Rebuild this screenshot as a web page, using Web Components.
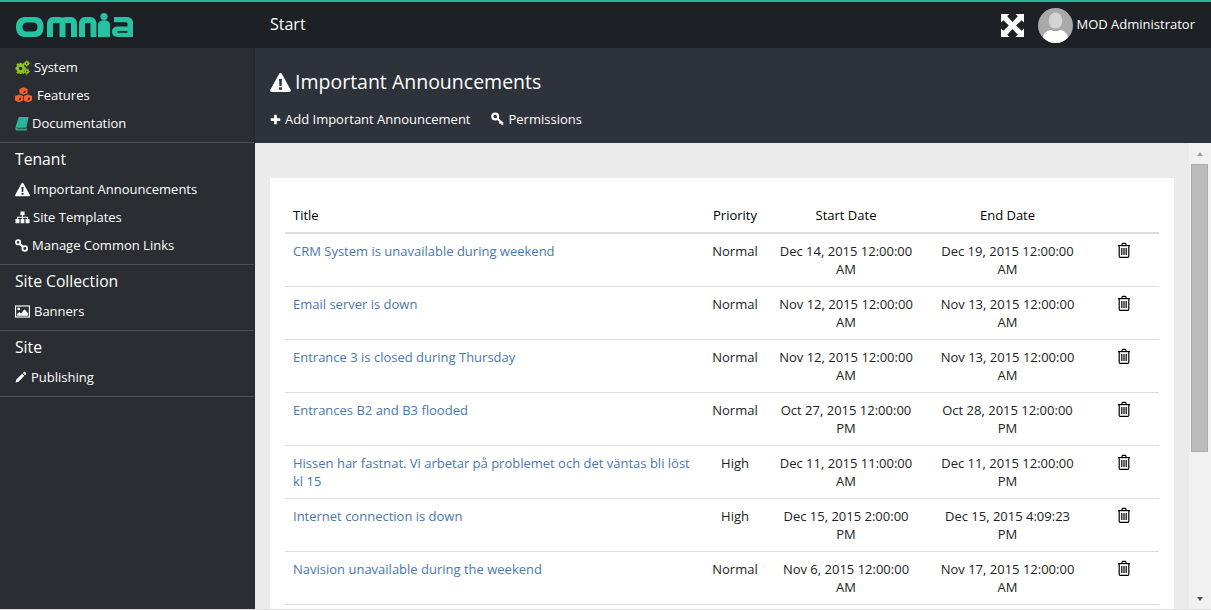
<!DOCTYPE html>
<html>
<head>
<meta charset="utf-8">
<title>Important Announcements</title>
<style>
html,body{margin:0;height:100%;overflow:hidden;background:#dedede;}
body{font-family:"Open Sans",sans-serif;font-size:13px;}
</style>
</head>
<body>
<omnia-app>
  <omnia-topbar slot="top" title-text="Start" user="MOD Administrator"></omnia-topbar>
  <omnia-sidebar slot="side">
    <side-section>
      <side-link label="System" icon="cogs" gap="4"></side-link>
      <side-link label="Features" icon="cubes" size="17" gap="5"></side-link>
      <side-link label="Documentation" icon="book" gap="2"></side-link>
    </side-section>
    <side-section heading="Tenant">
      <side-link label="Important Announcements" icon="warning" gap="3"></side-link>
      <side-link label="Site Templates" icon="sitemap" gap="3"></side-link>
      <side-link label="Manage Common Links" icon="link" size="13" gap="4"></side-link>
    </side-section>
    <side-section heading="Site Collection">
      <side-link label="Banners" icon="picture" gap="4"></side-link>
    </side-section>
    <side-section heading="Site">
      <side-link label="Publishing" icon="pencil" size="12" gap="4"></side-link>
    </side-section>
  </omnia-sidebar>
  <page-header slot="head" heading="Important Announcements"></page-header>
  <announcement-card slot="main">
    <announcement-row head title="Title" priority="Priority" start="Start Date" end="End Date"></announcement-row>
    <announcement-row title="CRM System is unavailable during weekend" priority="Normal" start="Dec 14, 2015 12:00:00 AM" end="Dec 19, 2015 12:00:00 AM"></announcement-row>
    <announcement-row title="Email server is down" priority="Normal" start="Nov 12, 2015 12:00:00 AM" end="Nov 13, 2015 12:00:00 AM"></announcement-row>
    <announcement-row title="Entrance 3 is closed during Thursday" priority="Normal" start="Nov 12, 2015 12:00:00 AM" end="Nov 13, 2015 12:00:00 AM"></announcement-row>
    <announcement-row title="Entrances B2 and B3 flooded" priority="Normal" start="Oct 27, 2015 12:00:00 PM" end="Oct 28, 2015 12:00:00 PM"></announcement-row>
    <announcement-row title="Hissen har fastnat. Vi arbetar på problemet och det väntas bli löst kl 15" priority="High" start="Dec 11, 2015 11:00:00 AM" end="Dec 11, 2015 12:00:00 PM"></announcement-row>
    <announcement-row title="Internet connection is down" priority="High" start="Dec 15, 2015 2:00:00 PM" end="Dec 15, 2015 4:09:23 PM"></announcement-row>
    <announcement-row title="Navision unavailable during the weekend" priority="Normal" start="Nov 6, 2015 12:00:00 AM" end="Nov 17, 2015 12:00:00 AM"></announcement-row>
  </announcement-card>
  <fake-scrollbar slot="bar"></fake-scrollbar>
</omnia-app>

<script>
// icon paths, all on a 16x16 box
const icons = {
  cogs: `<g fill="#8fc31f"><circle cx="6" cy="9" r="3.3" fill="none" stroke="#8fc31f" stroke-width="2.8"/>
    <path d="M4.800 3h2.400v2.200H4.800zM4.800 12.800h2.400V15H4.800zM.5 7.800h2.200v2.400H.5zM9.300 7.800h2.200v2.400H9.300zM1.400 4.800l1.700-1.700 1.500 1.500-1.700 1.700zM7.400 4.600l1.500-1.500 1.700 1.700-1.500 1.500zM1.400 13.200l1.700 1.700 1.500-1.500-1.700-1.700zM7.400 13.400l1.500 1.500 1.700-1.700-1.500-1.500z"/>
    <circle cx="12.600" cy="3.600" r="1.700" fill="none" stroke="#8fc31f" stroke-width="1.700"/>
    <circle cx="12.600" cy="12.200" r="1.700" fill="none" stroke="#8fc31f" stroke-width="1.700"/>
    <path d="M12 .4h1.200v1.200H12zM12 5.600h1.200v1.200H12zM9.400 3h1.200v1.200H9.400zM14.600 3h1.200v1.200h-1.200zM12 9h1.200v1.200H12zM12 14.200h1.200v1.200H12zM14.600 11.600h1.200v1.200h-1.200z"/></g>`,
  cubes: `<g fill="#f4612c"><path d="M8 .3l3.800 1.500v4L8 7.400 4.200 5.800v-4z"/><path d="M3.900 7l3.800 1.500v4.100L3.900 14.300 0 12.600V8.500z"/><path d="M12.100 7L16 8.500v4.100l-3.900 1.700-3.800-1.700V8.500z"/></g>
    <g fill="#2a2e32"><path d="M8 4l1.900-.8v1.800L8 5.800zM3.900 10.700l1.900-.8v1.800l-1.900.8zM12.100 10.700l1.900-.8v1.800l-1.900.8z"/></g>`,
  book: `<path fill="#2bb597" d="M4 1h10.500L12 12.500H1.500c-.8 0-1-.6-.8-1.300z"/><path fill="#2bb597" d="M1.800 13h10.600l.4.800-.5 1.700H2c-1 0-1.700-.8-1.500-2.200l.5-1.700c0 .9.300 1.400.8 1.400z"/><path fill="#2a2e32" d="M2.600 13.400h9.600v.6H2.600z"/>`,
  warning: `<path fill="#fff" fill-rule="evenodd" d="M8 .8c.5 0 .9.300 1.100.7l6.600 12.100c.4.800-.1 1.700-1 1.700H1.300c-.9 0-1.400-.9-1-1.700L6.900 1.500C7.100 1.100 7.500.8 8 .8zM6.900 5.300l.3 5.300h1.600l.3-5.300zM6.900 11.600v1.900h2.200v-1.900z"/>`,
  sitemap: `<path fill="#fff" d="M5.800 1.500h4.400v4H8.600v1.600h5.200v2.600h1.700V14h-4.200V9.700h1.400V8.300H8.600v1.400H10V14H6V9.700h1.400V8.300H3.300v1.400h1.400V14H.5V9.700h1.700V7.100h5.200V5.500H5.800z"/>`,
  link: `<g fill="none" stroke="#fff" stroke-width="2.200"><circle cx="3.800" cy="4" r="2.700"/><circle cx="12" cy="11.600" r="2.900"/><path d="M5.800 6l3.800 3.400" stroke-width="2.600"/></g>`,
  picture: `<rect x=".6" y="2.100" width="14.800" height="11.800" fill="none" stroke="#fff" stroke-width="1.200"/><circle cx="4" cy="5.200" r="1.500" fill="#fff"/><path fill="#fff" d="M2 12.600v-1.600l2.600-2.600 1.600 1.600 4-4.400 3.800 4.400v2.600z"/>`,
  pencil: `<path fill="#fff" d="M12 1.200c.4-.4 1-.4 1.400 0l1.400 1.400c.4.400.4 1 0 1.400l-1.500 1.500-2.800-2.800zM9.600 3.600l2.800 2.800-7.800 7.800-3.900 1.100 1.100-3.900z"/>`,
  plus: `<path fill="#fff" d="M6 1.600c0-.4.300-.6.600-.6h2.800c.4 0 .6.300.6.600V6h4.400c.4 0 .6.300.6.600v2.800c0 .4-.3.6-.6.6H10v4.400c0 .4-.3.6-.6.6H6.600c-.4 0-.6-.3-.6-.6V10H1.600C1.200 10 1 9.700 1 9.400V6.600C1 6.200 1.300 6 1.600 6H6z"/>`,
  key: `<g fill="none" stroke="#fff"><circle cx="4.800" cy="5.200" r="3.300" stroke-width="2.500"/><path d="M7.500 7.900l6.200 5.600" stroke-width="2.400"/><path d="M11.200 11.500l-1.600 1.800M13.600 13.300l-1.200 1.500" stroke-width="1.800"/></g>`,
  trash: `<g fill="none" stroke="#000" stroke-width="1.200"><path d="M2 3.600h12"/><path d="M3.200 3.600v10.600c0 .7.400 1.200 1 1.200h7.600c.6 0 1-.5 1-1.200V3.600"/><path d="M5.700 3.400l.4-1.300c.1-.4.400-.7.800-.7h2.200c.4 0 .7.300.8.700l.4 1.300"/><path d="M5.800 6v7M8 6v7M10.200 6v7"/></g>`,
  expand: `<path fill="#fff" d="M0 0h8.500L6.200 2.300l5.300 5.600 5.300-5.600L14.500 0H23v8.500l-2.300-2.300-5.600 5.300 5.600 5.300 2.300-2.300V23h-8.500l2.300-2.300-5.300-5.600-5.300 5.600L8.500 23H0v-8.500l2.300 2.300 5.600-5.300-5.600-5.300L0 8.500z"/>`
};
const svg = (name, w, h, box) => `<svg width="${w}" height="${h}" viewBox="${box || '0 0 16 16'}" aria-hidden="true">${icons[name]}</svg>`;

class OmniaApp extends HTMLElement {
  constructor() {
    super();
    this.attachShadow({mode: 'open'}).innerHTML = `
    <style>
    :host{display:grid;grid-template-columns:255px 1fr;grid-template-rows:48px 95px 1fr;height:calc(100vh - 1px);color:#fff;}
    .top{grid-column:1 / 3;}
    .side{grid-row:2 / 4;min-height:0;}
    .main{display:flex;min-height:0;min-width:0;background:#ebebeb;overflow:hidden;}
    .scroll{flex:1;min-width:0;overflow:hidden;}
    </style>
    <div class="top"><slot name="top"></slot></div>
    <div class="side"><slot name="side"></slot></div>
    <div class="head"><slot name="head"></slot></div>
    <div class="main"><div class="scroll"><slot name="main"></slot></div><slot name="bar"></slot></div>`;
  }
}

class OmniaTopbar extends HTMLElement {
  constructor() {
    super();
    this.attachShadow({mode: 'open'}).innerHTML = `
    <style>
    :host{display:flex;align-items:center;height:46px;border-top:2px solid #25b795;background:#1d2025;}
    .logo{width:255px;flex:none;display:flex;padding-left:16px;box-sizing:border-box;}
    .title{flex:1;padding:0 0 2px 15px;font-size:16px;color:#fff;}
    .expand{display:flex;margin-right:14px;}
    .avatar{width:35px;height:35px;margin-right:4px;}
    .user{font-size:13px;margin-right:16px;padding-bottom:2px;color:#fff;}
    svg{display:block;}
    </style>
    <div class="logo">
      <svg width="120" height="26" viewBox="16 12 120 26">
        <path fill="#27c2a2" fill-rule="evenodd" d="M25 17h10c5.500 0 8.500 3.500 8.500 10s-3 10-8.500 10H25c-5.500 0-9-3.500-9-10s3.500-10 9-10zM27 22.500c-3 0-4.500 1.500-4.500 4.500s1.500 4.500 4.500 4.500h6c3 0 4.500-1.500 4.500-4.500s-1.500-4.500-4.500-4.500z"/>
        <g fill="none" stroke="#27c2a2" stroke-width="6">
          <path d="M50 37V23.500c0-2 1-3.500 3-3.500h6.500c2 0 3 1.500 3 3.500V37M62.500 23.500c0-2 1-3.500 3-3.500h5.500c2 0 3 1.500 3 3.500V37"/>
          <path d="M82 37V23.500c0-2 1-3.500 3-3.500h5.500c2 0 3 1.500 3 3.500V37"/>
        </g>
        <circle cx="104" cy="16.500" r="3.600" fill="#27c2a2"/>
        <path fill="#27c2a2" d="M98 37V25c0-3 2.400-4.700 6-4.700s6 1.700 6 4.700v12z"/>
        <path fill="#27c2a2" fill-rule="evenodd" d="M114 17h12.500c4.200 0 6.500 2.200 6.500 6v14h-15c-3.900 0-6-1.900-6-5.200s2.100-5.300 6-5.300h9.500v-2.700c0-1-.6-1.500-1.700-1.500H114zM118.700 31c-.9 0-1.400.3-1.400.9s.5.900 1.400.9h8.800V31z"/>
      </svg>
    </div>
    <div class="title"></div>
    <div class="expand">${svg('expand', 23, 23, '0 0 23 23')}</div>
    <div class="avatar">
      <svg width="35" height="35" viewBox="0 0 35 35">
        <defs><clipPath id="c"><circle cx="17.500" cy="17.500" r="17.500"/></clipPath></defs>
        <circle cx="17.500" cy="17.500" r="17.500" fill="#a9a9a9"/>
        <g clip-path="url(#c)">
          <ellipse cx="17.500" cy="12.500" rx="6.800" ry="8" fill="#d4d4d4"/>
          <path d="M5 35v-5c0-5 4.500-7.500 8-8 2.500 1.600 6.500 1.600 9 0 3.500.5 8 3 8 8v5z" fill="#fff"/>
        </g>
      </svg>
    </div>
    <div class="user"></div>`;
    this.shadowRoot.querySelector('.title').textContent = this.getAttribute('title-text');
    this.shadowRoot.querySelector('.user').textContent = this.getAttribute('user');
  }
}

class OmniaSidebar extends HTMLElement {
  constructor() {
    super();
    this.attachShadow({mode: 'open'}).innerHTML = `
    <style>:host{display:block;height:100%;background:#2a2e32;border-right:1px solid #25282c;box-sizing:border-box;}</style>
    <slot></slot>`;
  }
}

class SideSection extends HTMLElement {
  constructor() {
    super();
    const heading = this.getAttribute('heading');
    this.attachShadow({mode: 'open'}).innerHTML = `
    <style>
    :host{display:block;border-bottom:1px solid #4b4e52;padding:5px 0;}
    h3{margin:0 0 3px;padding-left:15px;height:24px;line-height:22px;font-size:15.700px;font-weight:400;color:#fff;}
    </style>
    ${heading ? `<h3>${heading}</h3>` : ''}
    <slot></slot>`;
  }
}

class SideLink extends HTMLElement {
  constructor() {
    super();
    const size = this.getAttribute('size') || 15;
    this.attachShadow({mode: 'open'}).innerHTML = `
    <style>
    :host{display:flex;align-items:center;height:28px;padding-left:15px;font-size:13px;color:#fff;}
    svg{display:block;flex:none;}
    span{margin-left:${this.getAttribute('gap')}px;}
    </style>
    ${svg(this.getAttribute('icon'), size, size)}
    <span>${this.getAttribute('label')}</span>`;
  }
}

class PageHeader extends HTMLElement {
  constructor() {
    super();
    this.attachShadow({mode: 'open'}).innerHTML = `
    <style>
    :host{display:block;height:95px;background:#2e323a;padding:20px 15px 0;box-sizing:border-box;color:#fff;}
    h1{display:flex;align-items:center;margin:0;font-size:19.500px;font-weight:400;line-height:28px;}
    h1 svg{margin-right:4px;}
    nav{display:flex;align-items:center;margin-top:13px;font-size:13px;height:20px;}
    nav span{display:flex;align-items:center;}
    nav svg{margin-right:4px;}
    nav span + span{margin-left:20px;}
    svg{display:block;}
    </style>
    <h1>${svg('warning', 21, 21)}${this.getAttribute('heading')}</h1>
    <nav>
      <span>${svg('plus', 11, 11)}Add Important Announcement</span>
      <span>${svg('key', 14, 14)}Permissions</span>
    </nav>`;
  }
}

class AnnouncementCard extends HTMLElement {
  constructor() {
    super();
    this.attachShadow({mode: 'open'}).innerHTML = `
    <style>:host{display:block;margin:35px 15px 15px;height:639px;box-sizing:border-box;padding:23px 15px 0;background:#fff;color:#111;}</style>
    <slot></slot>`;
  }
}

class AnnouncementRow extends HTMLElement {
  constructor() {
    super();
    const head = this.hasAttribute('head');
    const a = n => this.getAttribute(n);
    this.attachShadow({mode: 'open'}).innerHTML = `
    <style>
    :host{display:grid;grid-template-columns:420px 60px 162px 161px 71px;font-size:13px;line-height:18px;border-bottom:${head ? '2px solid #ddd' : '1px solid #ddd'};color:${head ? '#000' : '#222'};}
    div{padding:${head ? '5px 8px 8px' : '8px'};text-align:center;min-height:${head ? '18px' : '36px'};}
    .title{text-align:left;}
    a{color:#4a78b0;text-decoration:none;}
    .prio{padding-left:0;padding-right:0;}
    .del{padding:8px 0 0 0;display:flex;justify-content:center;min-height:0;}
    svg{display:block;margin-top:0;}
    </style>
    <div class="title">${head ? a('title') : `<a href="#">${a('title')}</a>`}</div>
    <div class="prio">${a('priority')}</div>
    <div>${a('start')}</div>
    <div>${a('end')}</div>
    ${head ? '<div></div>' : `<div class="del">${svg('trash', 16, 16)}</div>`}`;
  }
}

class FakeScrollbar extends HTMLElement {
  constructor() {
    super();
    this.attachShadow({mode: 'open'}).innerHTML = `
    <style>
    :host{display:flex;flex-direction:column;width:22px;height:100%;background:#f1f1f1;}
    .btn{height:21px;flex:none;display:flex;justify-content:center;align-items:center;padding-right:1px;}
    .up{width:0;height:0;border:solid transparent;border-width:0 3.500px 4px;border-bottom-color:#a3a3a3;}
    .down{width:0;height:0;border:solid transparent;border-width:4px 3.500px 0;border-top-color:#505050;}
    .thumb{height:288px;margin:0 3px 0 2px;box-sizing:border-box;background:#bbb;border:1px solid #adadad;}
    .end{margin-top:auto;}
    </style>
    <div class="btn"><div class="up"></div></div>
    <div class="thumb"></div>
    <div class="btn end"><div class="down"></div></div>`;
  }
}

customElements.define('omnia-app', OmniaApp);
customElements.define('omnia-topbar', OmniaTopbar);
customElements.define('omnia-sidebar', OmniaSidebar);
customElements.define('side-section', SideSection);
customElements.define('side-link', SideLink);
customElements.define('page-header', PageHeader);
customElements.define('announcement-card', AnnouncementCard);
customElements.define('announcement-row', AnnouncementRow);
customElements.define('fake-scrollbar', FakeScrollbar);
</script>
</body>
</html>
